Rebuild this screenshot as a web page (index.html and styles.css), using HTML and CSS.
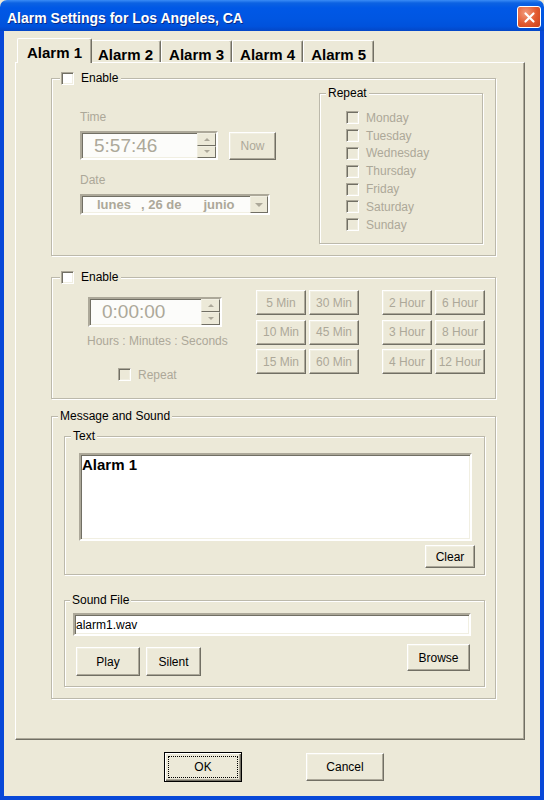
FILE: index.html
```html
<!DOCTYPE html>
<html lang="en">
<head>
    <meta charset="UTF-8">
    <title>Alarm Settings</title>
    <link rel="stylesheet" href="styles.css">
</head>
<body>

<div class="window">
    <!-- Title bar -->
    <div class="titlebar">
        <span class="title">Alarm Settings for Los Angeles, CA</span>
        <button class="close-btn" title="Close">
            <svg width="13" height="13" viewBox="0 0 13 13"><path d="M2.5 2.5 L10.5 10.5 M10.5 2.5 L2.5 10.5" stroke="#fff" stroke-width="2.2" stroke-linecap="round"/></svg>
        </button>
    </div>

    <div class="client">
        <!-- Tabs -->
        <div class="tabs">
            <div class="tab active">Alarm 1</div>
            <div class="tab">Alarm 2</div>
            <div class="tab">Alarm 3</div>
            <div class="tab">Alarm 4</div>
            <div class="tab">Alarm 5</div>
        </div>

        <div class="tab-panel">
            <!-- Alarm at a fixed time -->
            <div class="group group-alarm">
                <div class="legend"><span class="check"></span>Enable</div>
                <div class="group-body">
                    <div class="time-col">
                        <div class="field-label time-label">Time</div>
                        <div class="time-row">
                            <div class="field time-field">
                                <span class="clock-text">5:57:46</span>
                                <span class="spin"><span class="spin-btn up"></span><span class="spin-btn down"></span></span>
                            </div>
                            <button class="btn now-btn" disabled>Now</button>
                        </div>
                        <div class="field-label date-label">Date</div>
                        <div class="field date-field">
                            <span class="date-part day">lunes</span>
                            <span class="date-part num">, 26 de</span>
                            <span class="date-part month">junio</span>
                            <span class="drop-btn"></span>
                        </div>
                    </div>

                    <div class="group repeat-group">
                        <div class="legend legend-text">Repeat</div>
                        <ul class="days">
                            <li><span class="check disabled"></span>Monday</li>
                            <li><span class="check disabled"></span>Tuesday</li>
                            <li><span class="check disabled"></span>Wednesday</li>
                            <li><span class="check disabled"></span>Thursday</li>
                            <li><span class="check disabled"></span>Friday</li>
                            <li><span class="check disabled"></span>Saturday</li>
                            <li><span class="check disabled"></span>Sunday</li>
                        </ul>
                    </div>
                </div>
            </div>

            <!-- Countdown alarm -->
            <div class="group group-timer">
                <div class="legend"><span class="check"></span>Enable</div>
                <div class="group-body">
                    <div class="timer-col">
                        <div class="field timer-field">
                            <span class="clock-text">0:00:00</span>
                            <span class="spin"><span class="spin-btn up"></span><span class="spin-btn down"></span></span>
                        </div>
                        <div class="timer-hint">Hours : Minutes : Seconds</div>
                        <div class="timer-repeat"><span class="check disabled"></span>Repeat</div>
                    </div>
                    <div class="quick-grid">
                        <button class="btn" disabled>5 Min</button>
                        <button class="btn" disabled>30 Min</button>
                        <button class="btn" disabled>10 Min</button>
                        <button class="btn" disabled>45 Min</button>
                        <button class="btn" disabled>15 Min</button>
                        <button class="btn" disabled>60 Min</button>
                    </div>
                    <div class="quick-grid hours">
                        <button class="btn" disabled>2 Hour</button>
                        <button class="btn" disabled>6 Hour</button>
                        <button class="btn" disabled>3 Hour</button>
                        <button class="btn" disabled>8 Hour</button>
                        <button class="btn" disabled>4 Hour</button>
                        <button class="btn" disabled>12 Hour</button>
                    </div>
                </div>
            </div>

            <!-- Message and sound -->
            <div class="group group-message">
                <div class="legend legend-text">Message and Sound</div>

                <div class="group sub-text">
                    <div class="legend legend-text">Text</div>
                    <div class="field message-box">Alarm 1</div>
                    <button class="btn clear-btn">Clear</button>
                </div>

                <div class="group sub-sound">
                    <div class="legend legend-text">Sound File</div>
                    <div class="field file-field">alarm1.wav</div>
                    <div class="sound-actions">
                        <button class="btn play-btn">Play</button>
                        <button class="btn silent-btn">Silent</button>
                        <button class="btn browse-btn">Browse</button>
                    </div>
                </div>
            </div>
        </div>

        <div class="dialog-buttons">
            <button class="btn ok-btn"><span class="focus-ring">OK</span></button>
            <button class="btn cancel-btn">Cancel</button>
        </div>
    </div>
</div>

</body>
</html>
```

FILE: styles.css
```css
body {
    margin: 0;
    padding: 0;
    font-family: 'Liberation Sans', Arial, sans-serif;
    font-size: 12px;
    color: #000;
    background-color: #ece9d8;
}

.window {
    width: 544px;
    height: 800px;
    display: flex;
    flex-direction: column;
}

/* Title bar */
.titlebar {
    display: flex;
    align-items: flex-start;
    height: 31px;
    padding: 0 3px 0 7px;
    border-radius: 7px 7px 0 0;
    background: linear-gradient(180deg, #3a8cf6 0, #0c62e2 3px, #0058e6 8px, #0056e2 60%, #0052dc 85%, #0446c6 100%);
}

.title {
    margin-top: 10px;
    line-height: 16px;
    font-size: 14px;
    font-weight: bold;
    color: #fff;
    text-shadow: 1px 1px 0 #0a2a86;
}

.close-btn {
    margin: 6px 0 0 auto;
    width: 24px;
    height: 22px;
    padding: 0;
    display: flex;
    align-items: center;
    justify-content: center;
    border: 1px solid #fff;
    border-radius: 3px;
    background: radial-gradient(circle at 35% 30%, #f29a7c 0, #e2592f 55%, #c8401b 100%);
}

.client {
    flex: 1;
    display: flex;
    flex-direction: column;
    border: 4px solid #0848d8;
    border-top: none;
    background-color: #ece9d8;
}

/* Tabs */
.tabs {
    display: flex;
    align-items: flex-end;
    height: 24px;
    margin: 7px 0 0 15px;
    position: relative;
    z-index: 1;
}

.tab {
    height: 22px;
    box-sizing: border-box;
    padding: 5px 7px 0;
    line-height: 17px;
    font-size: 15px;
    font-weight: bold;
    border: 1px solid;
    border-color: #fff #716f64 transparent #fff;
    border-bottom: none;
    border-radius: 2px 2px 0 0;
    box-shadow: inset -1px 0 0 #aca899;
    background-color: #ece9d8;
}

.tab.active {
    height: 25px;
    margin: 0 -2px -1px -2px;
    padding: 5px 9px 0;
    position: relative;
    z-index: 2;
}

.tab-panel {
    height: 678px;
    margin: 0 15px 0 11px;
    box-sizing: border-box;
    display: flex;
    flex-direction: column;
    border: 1px solid;
    border-color: #fff #716f64 #716f64 #fff;
    box-shadow: inset -1px -1px 0 #aca899;
}

/* Group boxes */
.group {
    display: flex;
    flex-direction: column;
    box-sizing: border-box;
    border: 1px solid #bcb9ab;
    box-shadow: inset 1px 1px 0 #fff, 1px 1px 0 #fff;
}

.legend {
    align-self: flex-start;
    display: flex;
    align-items: center;
    gap: 7px;
    height: 15px;
    margin: -8px 0 0 8px;
    padding: 0 3px 0 1px;
    line-height: 15px;
    background-color: #ece9d8;
}

.legend-text {
    margin-left: 6px;
    padding: 0 2px;
}

.group-body {
    display: flex;
}

.check {
    width: 13px;
    height: 13px;
    box-sizing: border-box;
    flex-shrink: 0;
    border: 1px solid;
    border-color: #aca899 #fff #fff #aca899;
    box-shadow: inset 1px 1px 0 #716f64, inset -1px -1px 0 #f1efe2;
    background-color: #fff;
}

.check.disabled {
    background-color: #ece9d8;
}

.field {
    box-sizing: border-box;
    flex-shrink: 0;
    display: flex;
    align-items: center;
    border: 2px solid;
    border-color: #aca899 #fff #fff #aca899;
    box-shadow: inset 1px 1px 0 #716f64, inset -1px -1px 0 #f1efe2;
    background-color: #fcfcfa;
}

.btn {
    box-sizing: border-box;
    flex-shrink: 0;
    padding: 0;
    font-family: 'Liberation Sans', Arial, sans-serif;
    font-size: 12px;
    color: #000;
    background-color: #ece9d8;
    border: 1px solid;
    border-color: #fff #716f64 #716f64 #fff;
    box-shadow: inset -1px -1px 0 #aca899, inset 1px 1px 0 #f1efe2;
}

.btn:disabled {
    color: #aca899;
}

.field-label,
.timer-hint {
    line-height: 14px;
    color: #aca899;
}

.clock-text {
    padding-left: 12px;
    font-size: 19px;
    color: #aca899;
}

/* Up-down spinner */
.spin {
    display: flex;
    flex-direction: column;
    width: 19px;
    height: 100%;
    margin-left: auto;
}

.spin-btn {
    flex: 1;
    display: flex;
    align-items: center;
    justify-content: center;
    border: 1px solid;
    border-color: #f1efe2 #716f64 #716f64 #f1efe2;
    background-color: #ece9d8;
}

.spin-btn::before {
    content: "";
    border-left: 3px solid transparent;
    border-right: 3px solid transparent;
}

.spin-btn.up::before {
    border-bottom: 3px solid #aca899;
}

.spin-btn.down::before {
    border-top: 3px solid #aca899;
}

/* Fixed time alarm */
.group-alarm {
    width: 445px;
    height: 178px;
    margin: 15px 0 0 35px;
}

.time-col {
    width: 196px;
    padding-left: 28px;
}

.time-label {
    margin-top: 24px;
}

.time-row {
    display: flex;
    align-items: flex-start;
    margin-top: 7px;
}

.time-field {
    width: 138px;
    height: 29px;
}

.now-btn {
    width: 47px;
    height: 28px;
    margin: 1px 0 0 11px;
}

.date-label {
    margin-top: 13px;
}

.date-field {
    width: 190px;
    height: 21px;
    margin-top: 7px;
    font-size: 13px;
    font-weight: bold;
    color: #aca899;
    white-space: pre;
}

.date-part.day {
    margin-left: 15px;
}

.date-part.num {
    margin-left: 10px;
}

.date-part.month {
    margin-left: 22px;
}

.drop-btn {
    width: 18px;
    height: 100%;
    margin-left: auto;
    box-sizing: border-box;
    display: flex;
    align-items: center;
    justify-content: center;
    border: 1px solid;
    border-color: #f1efe2 #716f64 #716f64 #f1efe2;
    background-color: #ece9d8;
}

.drop-btn::before {
    content: "";
    border-left: 4px solid transparent;
    border-right: 4px solid transparent;
    border-top: 4px solid #aca899;
}

.repeat-group {
    width: 164px;
    height: 151px;
    margin: 7px 0 0 43px;
}

.days {
    list-style: none;
    margin: 8px 0 0;
    padding: 0 0 0 26px;
}

.days li {
    display: flex;
    align-items: center;
    gap: 7px;
    height: 17.8px;
    color: #aca899;
}

/* Countdown alarm */
.group-timer {
    width: 445px;
    height: 122px;
    margin: 21px 0 0 35px;
}

.timer-col {
    width: 169px;
    padding-left: 35px;
}

.timer-field {
    width: 134px;
    height: 30px;
    margin: 12px 0 0 1px;
}

.timer-hint {
    margin-top: 7px;
}

.timer-repeat {
    display: flex;
    align-items: center;
    gap: 7px;
    height: 15px;
    margin: 19px 0 0 31px;
    color: #aca899;
}

.quick-grid {
    display: grid;
    grid-template-columns: 50px 50px;
    grid-auto-rows: 25px;
    gap: 4.5px 3px;
    margin-top: 5px;
}

.quick-grid.hours {
    margin-left: 23px;
}

/* Message and sound */
.group-message {
    width: 445px;
    height: 283px;
    margin: 17px 0 0 35px;
}

.sub-text {
    width: 421px;
    height: 139px;
    margin: 12px 0 0 12px;
}

.message-box {
    width: 393px;
    height: 88px;
    margin: 9px 0 0 14px;
    padding: 1px 1px 0;
    align-items: flex-start;
    font-size: 15px;
    font-weight: bold;
    line-height: 17px;
    background-color: #fff;
}

.clear-btn {
    width: 50px;
    height: 23px;
    margin: 4px 0 0 360px;
}

.sub-sound {
    width: 421px;
    height: 87px;
    margin: 25px 0 0 12px;
}

.sub-sound .legend-text {
    margin-left: 5px;
}

.file-field {
    width: 398px;
    height: 23px;
    margin: 5px 0 0 8px;
    padding-left: 1px;
    background-color: #fff;
}

.sound-actions {
    display: flex;
    align-items: flex-start;
    margin-top: 8px;
}

.play-btn {
    width: 64px;
    height: 29px;
    margin: 3px 0 0 11px;
}

.silent-btn {
    width: 55px;
    height: 29px;
    margin: 3px 0 0 6px;
}

.browse-btn {
    width: 63px;
    height: 27px;
    margin: 0 14px 0 auto;
}

/* OK / Cancel */
.dialog-buttons {
    display: flex;
    align-items: flex-start;
    margin-top: 12px;
}

.ok-btn {
    width: 78px;
    height: 30px;
    margin-left: 160px;
    padding: 3px;
    border: 1px solid #000;
    box-shadow: inset 1px 1px 0 #fff, inset -1px -1px 0 #716f64, inset -2px -2px 0 #aca899;
}

.focus-ring {
    display: flex;
    align-items: center;
    justify-content: center;
    height: 100%;
    box-sizing: border-box;
    border: 1px dotted #000;
}

.cancel-btn {
    width: 78px;
    height: 28px;
    margin: 1px 0 0 64px;
}
```
